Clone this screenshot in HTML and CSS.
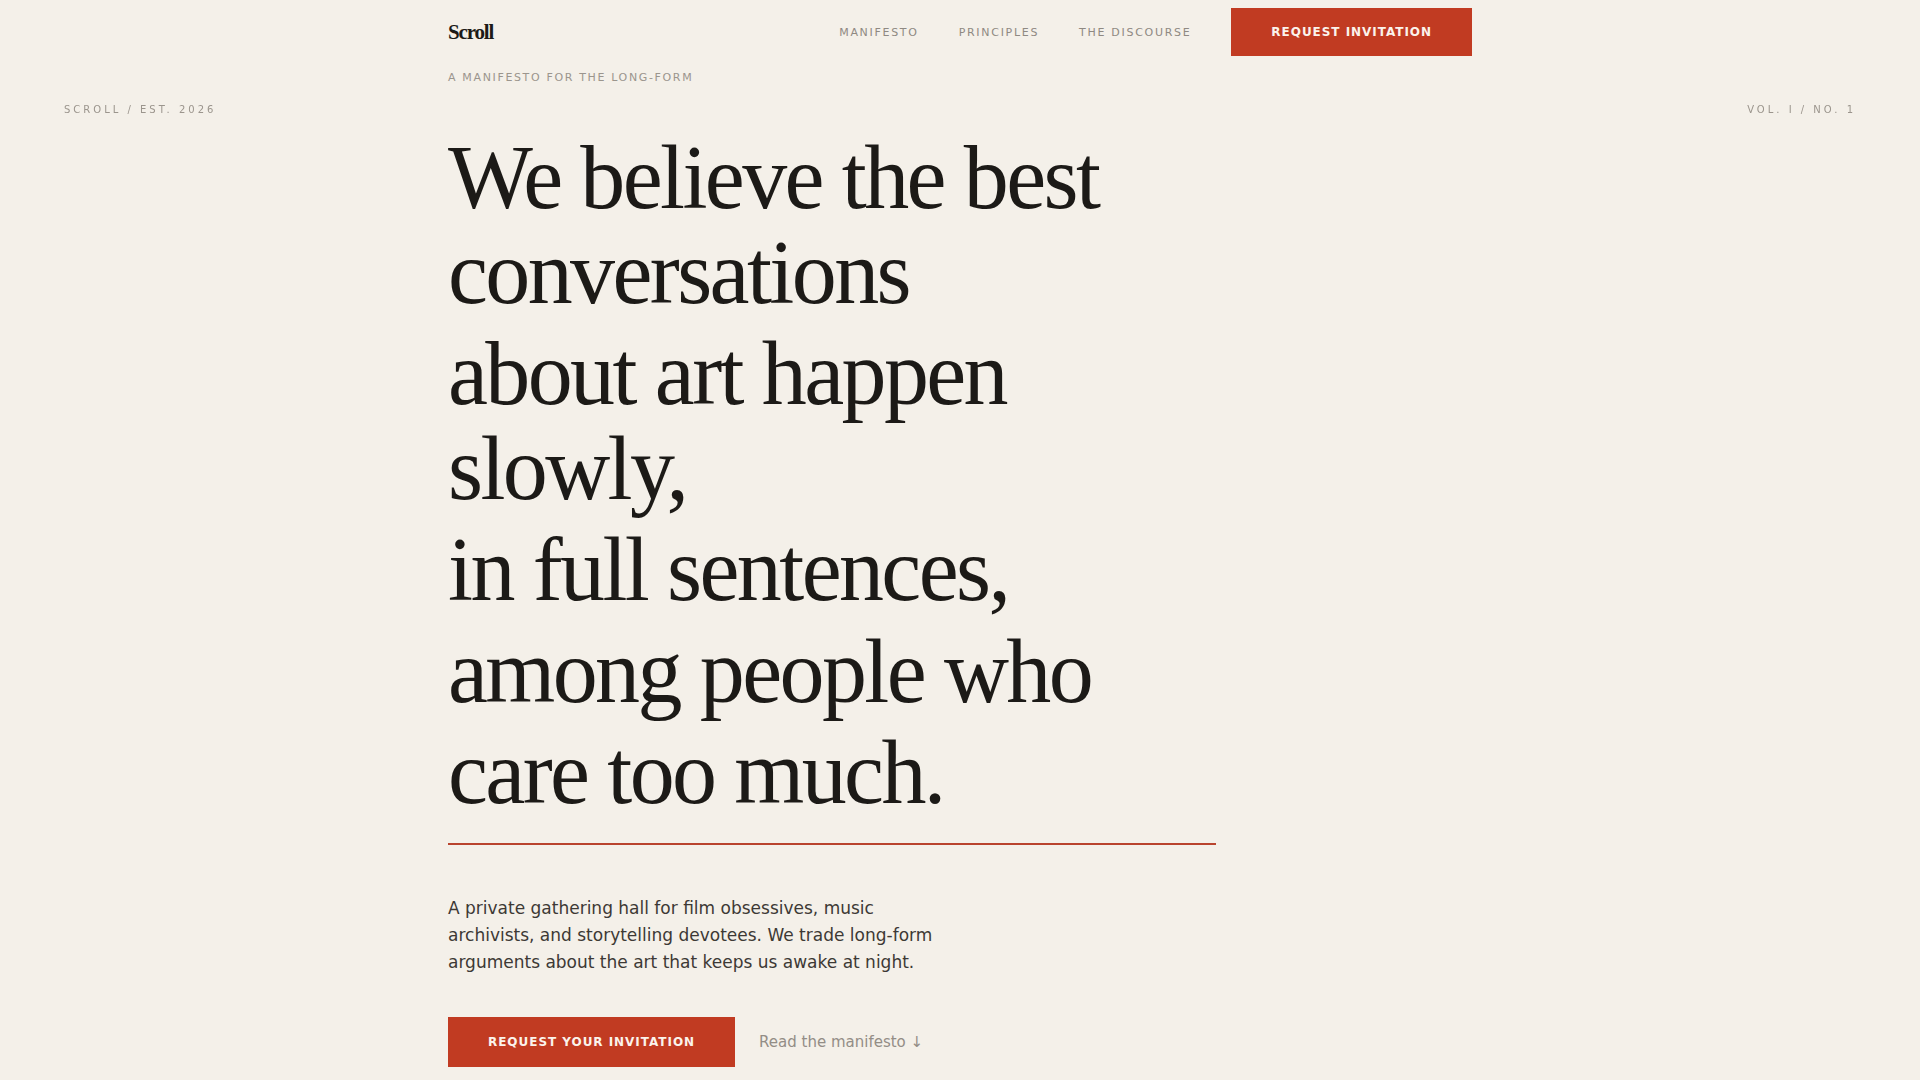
FILE: index.html
```html
<!DOCTYPE html>
<html lang="en">
<head>
<meta charset="utf-8">
<title>Scroll — A manifesto for the long-form</title>
<link rel="stylesheet" href="styles.css">
</head>
<body>
<div class="corner corner-left">SCROLL / EST. 2026</div>
<div class="corner corner-right">VOL. I / NO. 1</div>
<div class="page">
  <header class="header">
    <a class="logo" href="#">Scroll</a>
    <nav class="nav">
      <a class="nav-link" href="#">MANIFESTO</a>
      <a class="nav-link" href="#">PRINCIPLES</a>
      <a class="nav-link" href="#">THE DISCOURSE</a>
      <a class="btn btn-nav" href="#">REQUEST INVITATION</a>
    </nav>
  </header>
  <p class="tagline">A MANIFESTO FOR THE LONG-FORM</p>
  <main class="hero">
    <h1 class="headline">
      <span class="line">We believe the best conversations</span>
      <span class="line">about art happen slowly,</span>
      <span class="line">in full sentences,</span>
      <span class="line">among people who</span>
      <span class="line">care too much.</span>
    </h1>
    <hr class="rule">
    <p class="lede">A private gathering hall for film obsessives, music archivists, and storytelling devotees. We trade long-form arguments about the art that keeps us awake at night.</p>
    <div class="actions">
      <a class="btn btn-cta" href="#">REQUEST YOUR INVITATION</a>
      <a class="link-read" href="#">Read the manifesto ↓</a>
    </div>
  </main>
</div>
</body>
</html>
```

FILE: styles.css
```css
* { box-sizing: border-box; }
html, body { margin: 0; padding: 0; }
body {
  background: #f4f0e9;
  color: #1c1a17;
  font-family: "DejaVu Sans", sans-serif;
  min-height: 100vh;
}
a { text-decoration: none; color: inherit; }

.corner {
  position: fixed;
  top: 104px;
  font-size: 10px;
  letter-spacing: 0.3em;
  color: #9b958d;
  line-height: 12px;
}
.corner-left { left: 64px; }
.corner-right { right: 64px; }

.page {
  max-width: 1024px;
  margin: 0 auto;
}

.header {
  display: flex;
  align-items: center;
  justify-content: space-between;
  height: 48px;
  margin-top: 8px;
}
.logo {
  font-family: "Liberation Serif", serif;
  font-weight: 700;
  font-size: 21px;
  letter-spacing: -0.055em;
  color: #1c1a17;
}
.nav {
  display: flex;
  align-items: center;
  gap: 40px;
}
.nav-link {
  font-size: 11px;
  letter-spacing: 0.155em;
  color: #8f8982;
}
.btn {
  display: inline-flex;
  align-items: center;
  justify-content: center;
  background: #c13b22;
  color: #fbf3ec;
  font-weight: 700;
  font-size: 12px;
  letter-spacing: 0.08em;
}
.btn-nav {
  height: 48px;
  padding: 0 40px;
}

.tagline {
  margin: 15px 0 0;
  font-size: 11px;
  letter-spacing: 0.15em;
  color: #9b958d;
}

.headline {
  margin: 47px 0 0;
  max-width: 768px;
  font-family: "Liberation Serif", serif;
  font-weight: 400;
  font-size: 90px;
  line-height: 1.05;
  letter-spacing: -0.029em;
  color: #1c1a17;
}
.line {
  display: block;
  padding-bottom: 7px;
}

.rule {
  width: 768px;
  margin: 15px 0 0;
  border: 0;
  height: 2px;
  background: #b9442e;
}

.lede {
  margin: 50px 0 0;
  max-width: 500px;
  font-size: 17px;
  line-height: 1.6;
  color: #3d3935;
}

.actions {
  display: flex;
  align-items: center;
  gap: 24px;
  margin-top: 41px;
}
.btn-cta {
  height: 50px;
  padding: 0 40px;
}
.link-read {
  font-size: 15px;
  color: #938d86;
}
```
